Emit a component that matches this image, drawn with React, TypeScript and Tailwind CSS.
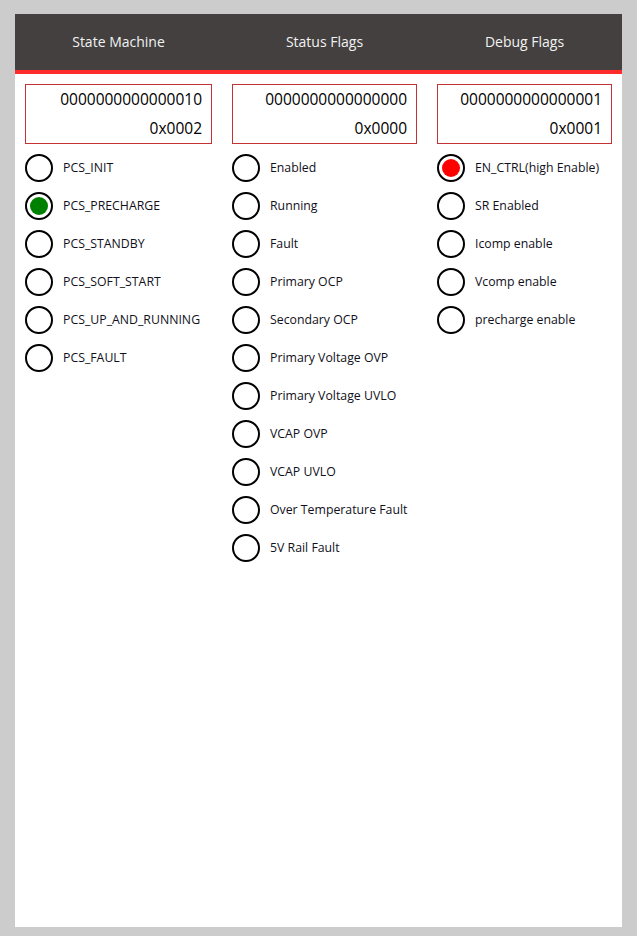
import React from "react";

type Item = { label: string; on?: "green" | "red" };

const columns: { title: string; bin: string; hex: string; width: string; items: Item[] }[] = [
  {
    title: "State Machine",
    bin: "0000000000000010",
    hex: "0x0002",
    width: "w-[187px]",
    items: [
      { label: "PCS_INIT" },
      { label: "PCS_PRECHARGE", on: "green" },
      { label: "PCS_STANDBY" },
      { label: "PCS_SOFT_START" },
      { label: "PCS_UP_AND_RUNNING" },
      { label: "PCS_FAULT" },
    ],
  },
  {
    title: "Status Flags",
    bin: "0000000000000000",
    hex: "0x0000",
    width: "w-[185px]",
    items: [
      { label: "Enabled" },
      { label: "Running" },
      { label: "Fault" },
      { label: "Primary OCP" },
      { label: "Secondary OCP" },
      { label: "Primary Voltage OVP" },
      { label: "Primary Voltage UVLO" },
      { label: "VCAP OVP" },
      { label: "VCAP UVLO" },
      { label: "Over Temperature Fault" },
      { label: "5V Rail Fault" },
    ],
  },
  {
    title: "Debug Flags",
    bin: "0000000000000001",
    hex: "0x0001",
    width: "w-[175px]",
    items: [
      { label: "EN_CTRL(high Enable)", on: "red" },
      { label: "SR Enabled" },
      { label: "Icomp enable" },
      { label: "Vcomp enable" },
      { label: "precharge enable" },
    ],
  },
];

const Led: React.FC<{ on?: "green" | "red" }> = ({ on }) => (
  <div className="h-7 w-7 shrink-0 rounded-full border-2 border-black bg-white flex items-center justify-center">
    {on === "green" && <div className="h-[18px] w-[18px] rounded-full bg-[#008000]" />}
    {on === "red" && <div className="h-[18px] w-[18px] rounded-full bg-[#ff0000]" />}
  </div>
);

export default function App() {
  return (
    <div
      className="min-h-screen bg-[#cdcccc] px-[15px] pt-[14px] pb-[9px]"
      style={{ fontFamily: '"Open Sans", "Noto Sans", sans-serif' }}
    >
      <div className="h-[913px] bg-white">
        <div className="border-b-4 border-[#ff2a2a] bg-[#43403f] px-[10px] pb-[2px] flex gap-5 h-[60px]">
          {columns.map((c) => (
            <div key={c.title} className={`${c.width} flex items-center justify-center text-[14px] text-[#f2f2f2]`}>
              {c.title}
            </div>
          ))}
        </div>
        <div className="px-[10px] pt-[10px] flex gap-5">
          {columns.map((c) => (
            <div key={c.title} className={c.width}>
              <div className="h-[60px] border border-[#c33333] pr-[9px] flex flex-col items-end justify-center text-[15.5px] leading-[29px] text-black">
                <div>{c.bin}</div>
                <div>{c.hex}</div>
              </div>
              <div className="mt-[10px] flex flex-col gap-[10px]">
                {c.items.map((it) => (
                  <div key={it.label} className="flex items-center gap-[10px]">
                    <Led on={it.on} />
                    <span className="text-[12.3px] text-[#10101a] whitespace-nowrap">{it.label}</span>
                  </div>
                ))}
              </div>
            </div>
          ))}
        </div>
      </div>
    </div>
  );
}
